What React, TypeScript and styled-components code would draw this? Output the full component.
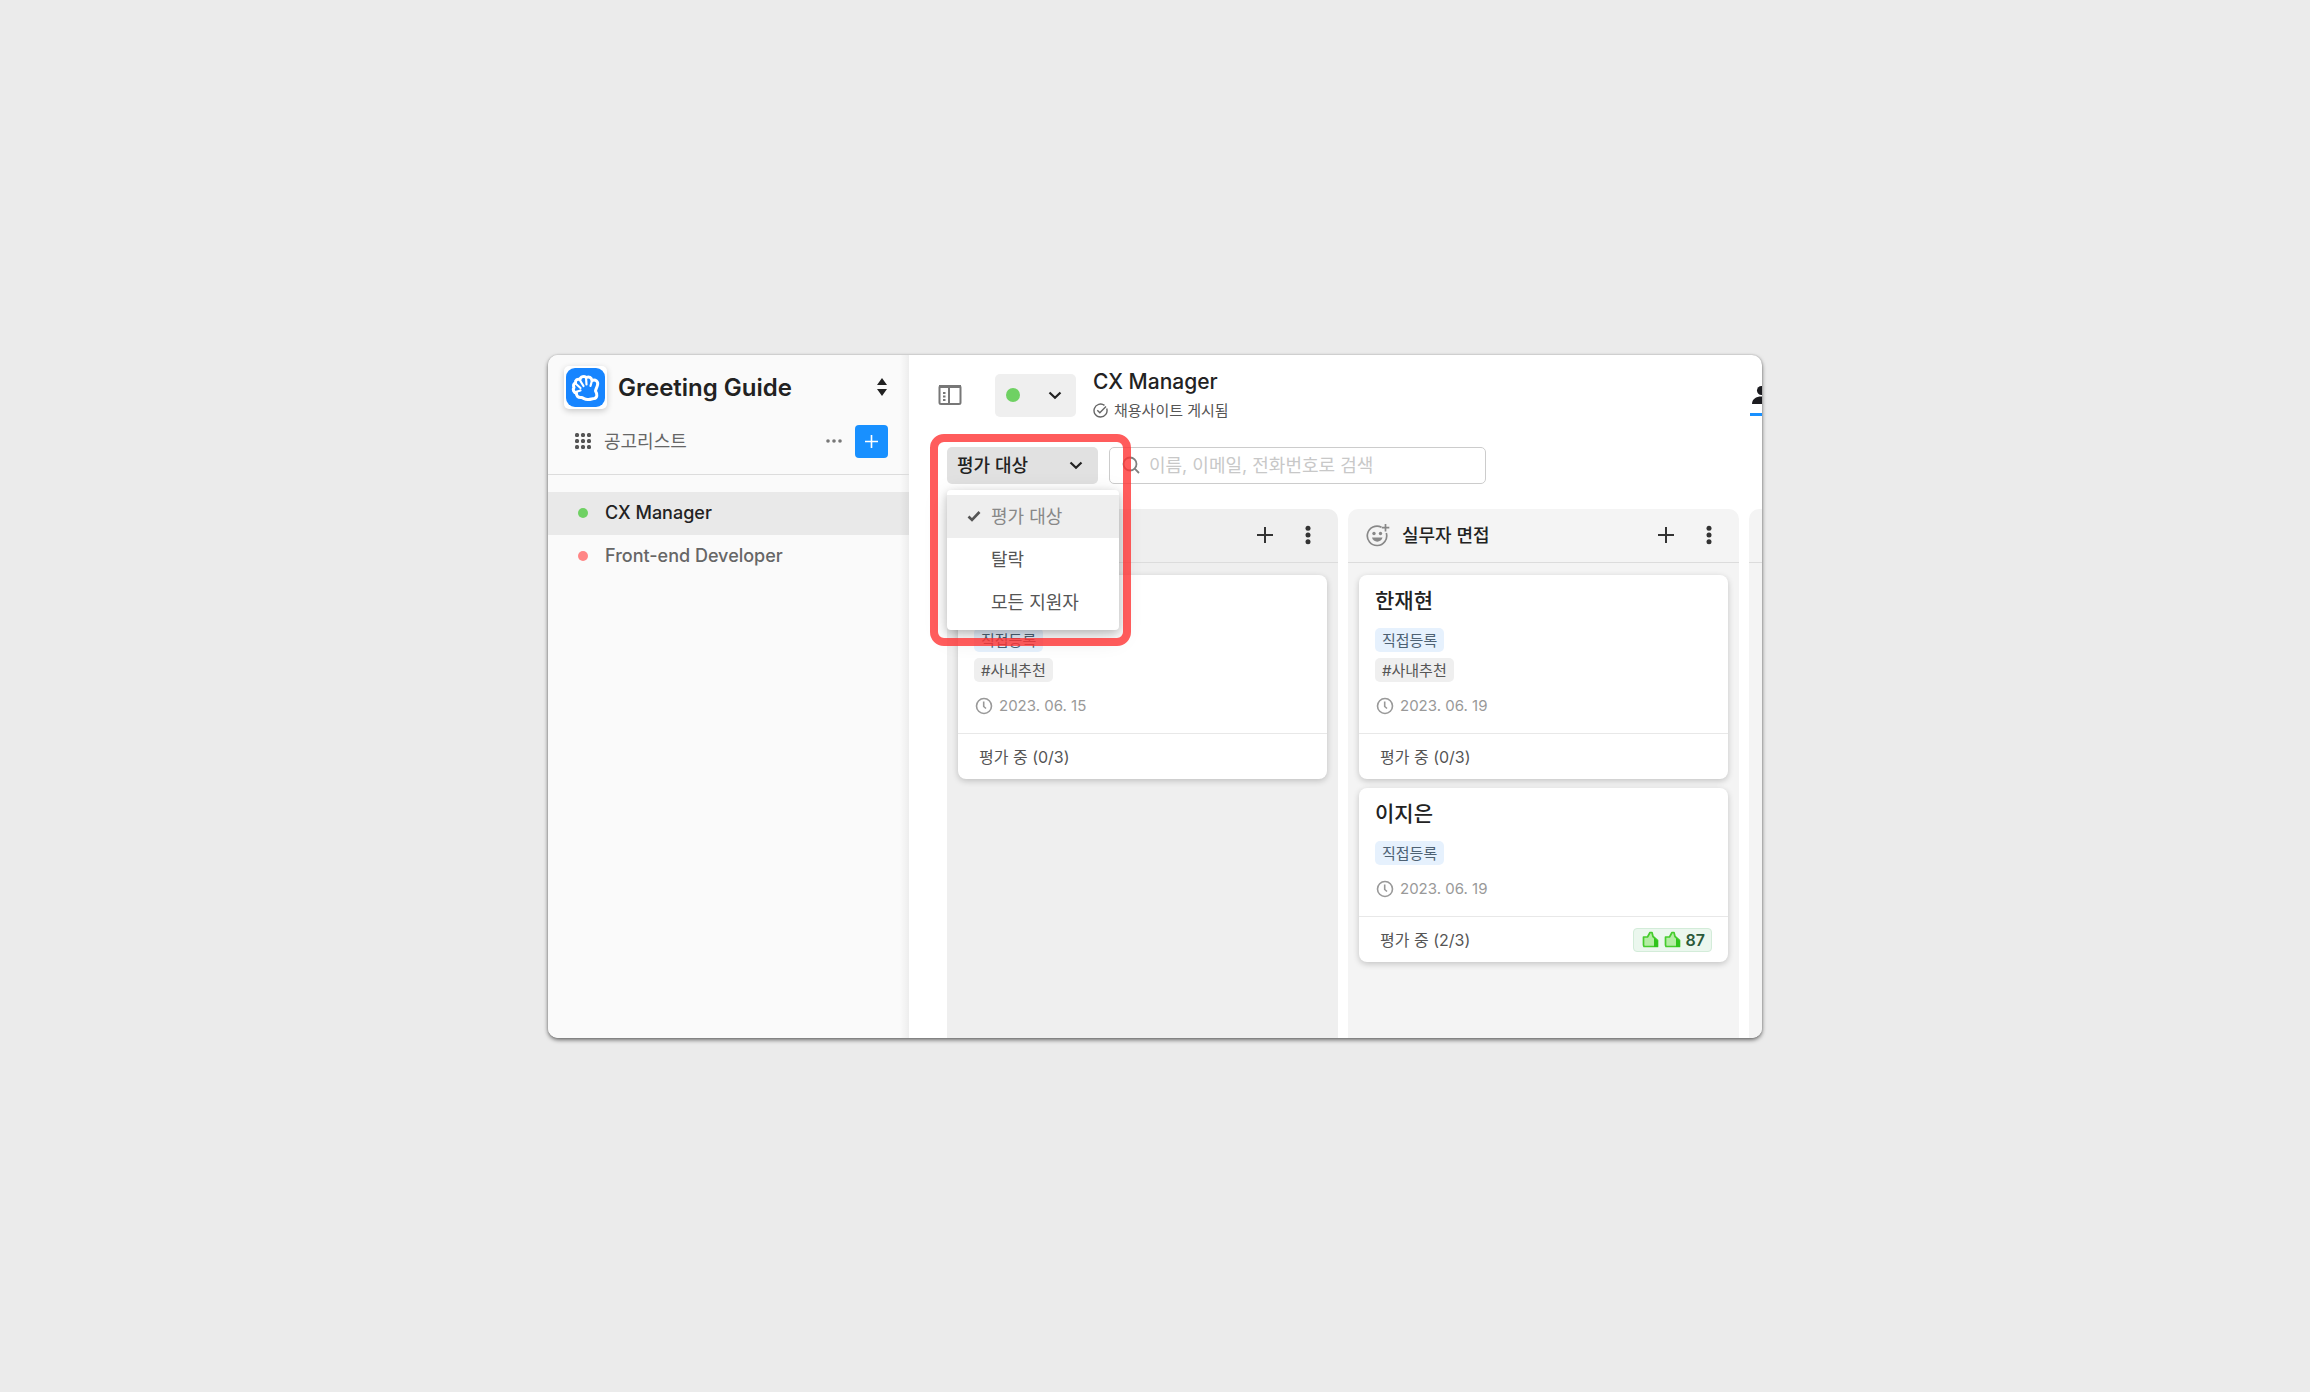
import React from "react";
import styled, { createGlobalStyle } from "styled-components";

const GlobalStyle = createGlobalStyle`
  *, *::before, *::after { box-sizing: border-box; }
  body {
    margin: 0;
    background: #ebebeb;
    color: #222;
    font-family: Inter, "Noto Sans CJK KR", sans-serif;
    font-size: 18px;
    line-height: 24px;
  }
  h1, h2, h3, p, ul { margin: 0; padding: 0; font: inherit; }
  ul { list-style: none; }
  button, input { font: inherit; color: inherit; }
  button { border: 0; padding: 0; background: none; cursor: pointer; }
  a { color: inherit; text-decoration: none; }
  svg { display: block; flex: none; }
`;

const Page = styled.main`
  min-height: 100vh;
  padding: 24px;
  display: flex;
  align-items: center;
  justify-content: center;
`;

const Window = styled.div`
  width: 100%;
  max-width: 1214px;
  min-height: 683px;
  display: flex;
  overflow: hidden;
  border-radius: 10px;
  background: #fff;
  box-shadow: 0 2px 4px rgba(0, 0, 0, 0.55), 0 0 2px rgba(0, 0, 0, 0.2);
`;

const Sidebar = styled.aside`
  flex: none;
  width: 361px;
  background: linear-gradient(to left, rgba(0, 0, 0, 0.05), rgba(0, 0, 0, 0) 9px) #fafafa;
`;

const Workspace = styled.header`
  display: flex;
  align-items: center;
  gap: 11px;
  padding: 11px 22px 0 16px;
`;

const LogoTile = styled.span`
  padding: 2px;
  border-radius: 5px;
  background: #fff;
  box-shadow: 0 2px 6px rgba(0, 0, 0, 0.2);
`;

const WorkspaceName = styled.h1`
  flex: 1;
  padding-top: 1px;
  font-size: 24px;
  line-height: 32px;
  font-weight: 600;
`;

const ListBar = styled.div`
  display: flex;
  align-items: center;
  gap: 13px;
  padding: 16px 21px 16px 27px;
  border-bottom: 1px solid #dcdcdc;
`;

const Label = styled.span`
  padding-top: 2px;
`;

const ListLink = styled.a`
  flex: 1;
  display: flex;
  align-items: center;
  gap: 13px;
  color: #666;
`;

const AddButton = styled.button`
  width: 33px;
  height: 33px;
  display: grid;
  place-items: center;
  border-radius: 4px;
  background: #1890ff;
`;

const JobList = styled.ul`
  padding-top: 17px;
`;

const JobLink = styled.a<{ $active?: boolean }>`
  display: flex;
  align-items: center;
  gap: 17px;
  height: 43px;
  padding-left: 30px;
  font-weight: 500;
  color: ${(p) => (p.$active ? "#222" : "#666")};
  background: ${(p) => (p.$active ? "rgba(0, 0, 0, 0.065)" : "transparent")};
`;

const Dot = styled.span<{ $color: string; $size: number }>`
  flex: none;
  width: ${(p) => p.$size}px;
  height: ${(p) => p.$size}px;
  border-radius: 50%;
  background: ${(p) => p.$color};
`;

const Main = styled.section`
  flex: 1;
  min-width: 0;
  display: flex;
  flex-direction: column;
`;

const TopBar = styled.header`
  display: flex;
  padding: 11px 0 0 29px;
`;

const PanelToggle = styled.button`
  align-self: flex-start;
  padding: 18px 0 0;
`;

const StatusButton = styled.button`
  width: 81px;
  height: 43px;
  margin: 8px 17px 0 33px;
  padding: 0 14px 0 11px;
  display: flex;
  align-items: center;
  justify-content: space-between;
  border-radius: 5px;
  background: #efefef;
`;

const JobHeading = styled.div`
  flex: 1;
`;

const JobTitle = styled.h2`
  font-size: 21px;
  line-height: 31px;
  font-weight: 500;
`;

const Published = styled.p`
  display: flex;
  align-items: center;
  gap: 6px;
  padding-top: 2px;
  font-size: 15px;
  color: #555;
`;

const PeopleTab = styled.a`
  width: 12px;
  height: 34px;
  margin-top: 16px;
  padding: 4px 0 0 2px;
  overflow: hidden;
  border-bottom: 3px solid #1890ff;
`;

const Filters = styled.div`
  display: flex;
  gap: 11px;
  padding: 24px 0 0 38px;
`;

const FilterBox = styled.div`
  position: relative;
`;

const FilterButton = styled.button`
  width: 151px;
  height: 37px;
  padding: 0 15px 0 10px;
  display: flex;
  align-items: center;
  justify-content: space-between;
  border-radius: 5px;
  background: #e1e1e1;
  font-weight: 500;
`;

const Menu = styled.ul`
  position: absolute;
  z-index: 2;
  top: 43px;
  left: 0;
  width: 172px;
  padding: 5px 0 6px;
  border-radius: 4px;
  background: #fff;
  box-shadow: 0 6px 24px rgba(0, 0, 0, 0.14), 0 3px 8px rgba(0, 0, 0, 0.2);
`;

const MenuItem = styled.button<{ $checked?: boolean }>`
  width: 100%;
  height: 43px;
  padding-left: 20px;
  display: grid;
  grid-template-columns: 24px 1fr;
  align-items: center;
  text-align: left;
  color: ${(p) => (p.$checked ? "#888" : "#555")};
  background: ${(p) => (p.$checked ? "#eee" : "transparent")};
`;

const Highlight = styled.div`
  position: absolute;
  z-index: 3;
  top: -13px;
  left: -17px;
  width: 201px;
  height: 212px;
  border: 8px solid rgba(255, 51, 51, 0.8);
  border-radius: 14px;
  pointer-events: none;
`;

const SearchBox = styled.label`
  width: 377px;
  height: 37px;
  padding: 0 12px;
  display: flex;
  align-items: center;
  gap: 9px;
  border: 1px solid #ccc;
  border-radius: 5px;
`;

const SearchInput = styled.input`
  flex: 1;
  min-width: 0;
  padding: 2px 0 0;
  border: 0;
  outline: 0;
  background: none;
  &::placeholder { color: #c8c8c8; opacity: 1; }
`;

const Board = styled.div`
  flex: 1;
  display: flex;
  gap: 10px;
  padding: 25px 0 0 38px;
  overflow: hidden;
`;

const Column = styled.section<{ $active?: boolean }>`
  flex: none;
  width: 391px;
  border-radius: 10px 10px 0 0;
  background: ${(p) => (p.$active ? "#efefef" : "#f4f4f4")};
`;

const ColumnHead = styled.header`
  height: 54px;
  padding: 0 20px 0 18px;
  display: flex;
  align-items: center;
  gap: 12px;
  border-bottom: 1px solid #dcdcdc;
`;

const ColumnTitle = styled.h2`
  flex: 1;
  padding-top: 2px;
  font-weight: 500;
`;

const ColumnActions = styled.div`
  display: flex;
  align-items: center;
  gap: 25px;
`;

const Cards = styled.div`
  display: flex;
  flex-direction: column;
  gap: 9px;
  padding: 12px 11px;
`;

const Card = styled.article`
  border-radius: 8px;
  background: #fff;
  box-shadow: 0 2px 6px rgba(0, 0, 0, 0.2);
`;

const CardBody = styled.div`
  padding: 12px 16px 15px;
`;

const CardName = styled.h3`
  min-height: 28px;
  font-size: 21px;
  line-height: 28px;
  font-weight: 500;
`;

const Tags = styled.div`
  display: flex;
  flex-direction: column;
  align-items: flex-start;
  gap: 6px;
  padding: 13px 0 12px;
`;

const Tag = styled.span<{ $source?: boolean }>`
  height: 24px;
  padding: 1px 7px 0;
  border-radius: 5px;
  font-size: 15px;
  line-height: 23px;
  color: ${(p) => (p.$source ? "#4d6173" : "#555")};
  background: ${(p) => (p.$source ? "#e6f1fd" : "#efefef")};
`;

const DateLine = styled.p`
  display: flex;
  align-items: center;
  gap: 6px;
  padding-left: 1px;
  font-size: 15px;
  color: #999;
`;

const CardFoot = styled.footer`
  height: 46px;
  padding: 1px 16px 0 21px;
  display: flex;
  align-items: center;
  justify-content: space-between;
  border-top: 1px solid #e8e8e8;
  font-size: 16px;
  color: #555;
`;

const Score = styled.span`
  height: 24px;
  padding: 0 6px 0 8px;
  display: flex;
  align-items: center;
  gap: 5px;
  border: 1px solid #d3ecd9;
  border-radius: 4px;
  background: #ebf7ee;
  color: #2b5a3a;
  font-weight: 600;
`;

const Logo = () => (
  <svg width="39" height="39" viewBox="0 0 39 39" aria-hidden="true">
    <rect width="39" height="39" rx="9" fill="#1785ff" />
    <path
      d="M9.500 15C9 12 11.500 10.800 14 11.500C14.500 8.500 18.500 7.500 20.500 9.500C23 8.300 25.500 9.500 26 12.500C29.500 11 32.500 13.500 31.500 17C31 19.500 29.800 21 29.500 23C31.500 26 31.500 30 28 30.500C26 30.500 24.500 31.800 22 31.500C19 31.800 17.500 30 15.500 29.500C12 30 10 27.500 10.500 25C7.500 24.500 6.500 21.500 8 19.500C7 17.500 7.500 15.500 9.500 15Z"
      fill="#1785ff" stroke="#fff" strokeWidth="3" strokeLinejoin="round"
    />
    <path
      d="M13.500 11.500L17.500 18M20 9.500L20.500 16.500M9.500 15.500L14.500 20M9.500 24L14.500 22.500M26 12.500L24.500 18"
      stroke="#fff" strokeWidth="2.200" strokeLinecap="round"
    />
  </svg>
);

const Chevron = () => (
  <svg width="14" height="14" viewBox="0 0 14 14" fill="none" stroke="#222" strokeWidth="2.200" aria-hidden="true">
    <path d="M1.500 4.500L7 9.800L12.500 4.500" />
  </svg>
);

const Plus = ({ size, color, width }: { size: number; color: string; width: number }) => (
  <svg width={size} height={size} viewBox="0 0 16 16" stroke={color} strokeWidth={width} aria-hidden="true">
    <path d="M8 0V16M0 8H16" />
  </svg>
);

const Sort = () => (
  <svg width="10" height="18" viewBox="0 0 10 18" fill="#222" aria-hidden="true">
    <path d="M5 0L10 7H0ZM5 18L10 11H0Z" />
  </svg>
);

const GridIcon = () => (
  <svg width="16" height="16" viewBox="0 0 16 16" fill="#555" aria-hidden="true">
    {[0, 6, 12].map((y) => [0, 6, 12].map((x) => <rect key={`${x}-${y}`} x={x} y={y} width="4" height="4" rx="1.500" />))}
  </svg>
);

const MoreH = () => (
  <svg width="16" height="4" viewBox="0 0 16 4" fill="#777" aria-hidden="true">
    <circle cx="2" cy="2" r="1.800" /><circle cx="8" cy="2" r="1.800" /><circle cx="14" cy="2" r="1.800" />
  </svg>
);

const MoreV = () => (
  <svg width="20" height="20" viewBox="0 0 20 20" fill="#333" aria-hidden="true">
    <circle cx="10" cy="3.300" r="2.500" /><circle cx="10" cy="10" r="2.500" /><circle cx="10" cy="16.700" r="2.500" />
  </svg>
);

const PanelIcon = () => (
  <svg width="24" height="22" viewBox="0 0 24 22" fill="none" stroke="#777" aria-hidden="true">
    <rect x="1.500" y="2" width="21" height="18" rx="1.500" strokeWidth="2" />
    <path d="M1 2.500H23" strokeWidth="3" />
    <path d="M11 3V20" strokeWidth="2" />
    <path d="M5 9H7.500M5 12.500H7.500M5 16H7.500" strokeWidth="1.800" />
  </svg>
);

const CheckCircle = () => (
  <svg width="15" height="15" viewBox="0 0 15 15" fill="none" stroke="#666" strokeWidth="1.400" aria-hidden="true">
    <path d="M13.700 5.500A6.500 6.500 0 1 1 11.500 2.400" />
    <path d="M4.300 7.300L6.800 9.700L13 3.500" />
  </svg>
);

const SearchIcon = () => (
  <svg width="18" height="18" viewBox="0 0 18 18" fill="none" stroke="#808080" strokeWidth="1.800" aria-hidden="true">
    <circle cx="8" cy="8" r="6.500" /><path d="M12.700 12.700L17 17" />
  </svg>
);

const CheckMark = () => (
  <svg width="14" height="12" viewBox="0 0 14 12" fill="none" stroke="#555" strokeWidth="2.600" aria-hidden="true">
    <path d="M1.500 6.500L5 10L12.500 2" />
  </svg>
);

const SmilePlus = () => (
  <svg width="24" height="24" viewBox="0 0 24 24" fill="none" stroke="#888" strokeWidth="1.700" aria-hidden="true">
    <path d="M15.500 4.200A9.700 9.700 0 1 0 20.300 10" />
    <path d="M19.500 1V8.500M15.800 4.700H23.300" />
    <circle cx="8" cy="10.500" r="1.700" fill="#888" stroke="none" />
    <circle cx="14.500" cy="10.500" r="1.700" fill="#888" stroke="none" />
    <path d="M6 14.500H16.500C15.500 20 7 20 6 14.500Z" fill="#888" stroke="none" />
  </svg>
);

const Clock = () => (
  <svg width="18" height="18" viewBox="0 0 18 18" fill="none" stroke="#999" strokeWidth="1.600" aria-hidden="true">
    <circle cx="9" cy="9" r="7.500" /><path d="M8.700 4.500V9.500L11 11.500" />
  </svg>
);

const Thumb = () => (
  <svg width="17" height="17" viewBox="0 0 17 17" aria-hidden="true">
    <path d="M1.500 6H5.500L8 1.500H10L11 5.500L15.500 9.500V15.500H2L1.500 14Z" fill="#b4eda4" stroke="#45cc2d" strokeWidth="1.700" strokeLinejoin="round" />
    <path d="M12 7L16 10V16H12Z" fill="#2fc41c" />
  </svg>
);

const People = () => (
  <svg width="24" height="20" viewBox="0 0 24 20" fill="#1c1c20" aria-hidden="true">
    <circle cx="9.500" cy="4.500" r="4.500" />
    <path d="M0 18C0 13 4 10.500 9.500 10.500S19 13 19 18Z" />
  </svg>
);

type Applicant = { name?: string; source: string; tags: string[]; date: string; progress: string; score?: number };

const screening: Applicant[] = [
  { source: "직접등록", tags: ["#사내추천"], date: "2023. 06. 15", progress: "평가 중 (0/3)" },
];

const interview: Applicant[] = [
  { name: "한재현", source: "직접등록", tags: ["#사내추천"], date: "2023. 06. 19", progress: "평가 중 (0/3)" },
  { name: "이지은", source: "직접등록", tags: [], date: "2023. 06. 19", progress: "평가 중 (2/3)", score: 87 },
];

const ApplicantCard = ({ name, source, tags, date, progress, score }: Applicant) => (
  <Card>
    <CardBody>
      <CardName>{name}</CardName>
      <Tags>
        <Tag $source>{source}</Tag>
        {tags.map((t) => <Tag key={t}>{t}</Tag>)}
      </Tags>
      <DateLine><Clock />{date}</DateLine>
    </CardBody>
    <CardFoot>
      {progress}
      {score !== undefined && <Score><Thumb /><Thumb />{score}</Score>}
    </CardFoot>
  </Card>
);

type StageProps = { title?: string; active?: boolean; applicants: Applicant[] };

const Stage = ({ title, active, applicants }: StageProps) => (
  <Column $active={active}>
    <ColumnHead>
      <SmilePlus />
      <ColumnTitle>{title}</ColumnTitle>
      <ColumnActions>
        <button aria-label="추가"><Plus size={16} color="#333" width={2} /></button>
        <button aria-label="더보기"><MoreV /></button>
      </ColumnActions>
    </ColumnHead>
    <Cards>
      {applicants.map((a, i) => <ApplicantCard key={i} {...a} />)}
    </Cards>
  </Column>
);

export default function App() {
  return (
    <Page>
      <GlobalStyle />
      <Window>
        <Sidebar>
          <Workspace>
            <LogoTile><Logo /></LogoTile>
            <WorkspaceName>Greeting Guide</WorkspaceName>
            <button aria-label="워크스페이스 변경"><Sort /></button>
          </Workspace>
          <ListBar>
            <ListLink href="#jobs"><GridIcon /><Label>공고리스트</Label></ListLink>
            <button aria-label="더보기"><MoreH /></button>
            <AddButton aria-label="공고 추가"><Plus size={13} color="#fff" width={2} /></AddButton>
          </ListBar>
          <JobList>
            <li><JobLink href="#cx" $active><Dot $size={10} $color="#6fd163" />CX Manager</JobLink></li>
            <li><JobLink href="#fe"><Dot $size={10} $color="#ff8585" />Front-end Developer</JobLink></li>
          </JobList>
        </Sidebar>
        <Main>
          <TopBar>
            <PanelToggle aria-label="사이드바 접기"><PanelIcon /></PanelToggle>
            <StatusButton aria-label="공고 상태"><Dot $size={14} $color="#6fd163" /><Chevron /></StatusButton>
            <JobHeading>
              <JobTitle>CX Manager</JobTitle>
              <Published><CheckCircle />채용사이트 게시됨</Published>
            </JobHeading>
            <PeopleTab href="#people" aria-label="지원자"><People /></PeopleTab>
          </TopBar>
          <Filters>
            <FilterBox>
              <FilterButton aria-haspopup="menu" aria-expanded="true"><Label>평가 대상</Label><Chevron /></FilterButton>
              <Menu role="menu">
                <li role="none"><MenuItem role="menuitemradio" aria-checked="true" $checked><CheckMark /><Label>평가 대상</Label></MenuItem></li>
                <li role="none"><MenuItem role="menuitemradio" aria-checked="false"><i /><Label>탈락</Label></MenuItem></li>
                <li role="none"><MenuItem role="menuitemradio" aria-checked="false"><i /><Label>모든 지원자</Label></MenuItem></li>
              </Menu>
              <Highlight />
            </FilterBox>
            <SearchBox>
              <SearchIcon />
              <SearchInput type="search" aria-label="지원자 검색" placeholder="이름, 이메일, 전화번호로 검색" />
            </SearchBox>
          </Filters>
          <Board>
            <Stage active applicants={screening} />
            <Stage title="실무자 면접" applicants={interview} />
            <Stage applicants={[]} />
          </Board>
        </Main>
      </Window>
    </Page>
  );
}
